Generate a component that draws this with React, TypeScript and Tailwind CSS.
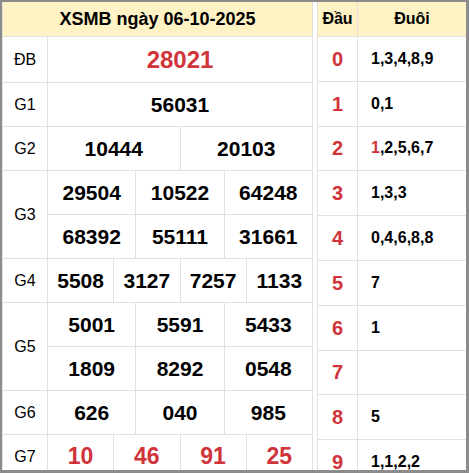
const RED = 'text-[#d0343a]';

const prizes: { label: string; rows: string[][]; size: string; red?: boolean; tall?: boolean }[] = [
  { label: 'ĐB', rows: [['28021']], size: 'text-[24px]', red: true, tall: true },
  { label: 'G1', rows: [['56031']], size: 'text-[21px]' },
  { label: 'G2', rows: [['10444', '20103']], size: 'text-[21px]' },
  { label: 'G3', rows: [['29504', '10522', '64248'], ['68392', '55111', '31661']], size: 'text-[21px]' },
  { label: 'G4', rows: [['5508', '3127', '7257', '1133']], size: 'text-[21px]' },
  { label: 'G5', rows: [['5001', '5591', '5433'], ['1809', '8292', '0548']], size: 'text-[21px]' },
  { label: 'G6', rows: [['626', '040', '985']], size: 'text-[21px]' },
  { label: 'G7', rows: [['10', '46', '91', '25']], size: 'text-[23px]', red: true },
];

const heads: { head: string; tails: { v: string; red?: boolean }[] }[] = [
  { head: '0', tails: [{ v: '1' }, { v: '3' }, { v: '4' }, { v: '8' }, { v: '9' }] },
  { head: '1', tails: [{ v: '0' }, { v: '1' }] },
  { head: '2', tails: [{ v: '1', red: true }, { v: '2' }, { v: '5' }, { v: '6' }, { v: '7' }] },
  { head: '3', tails: [{ v: '1' }, { v: '3' }, { v: '3' }] },
  { head: '4', tails: [{ v: '0' }, { v: '4' }, { v: '6' }, { v: '8' }, { v: '8' }] },
  { head: '5', tails: [{ v: '7' }] },
  { head: '6', tails: [{ v: '1' }] },
  { head: '7', tails: [] },
  { head: '8', tails: [{ v: '5' }] },
  { head: '9', tails: [{ v: '1' }, { v: '1' }, { v: '2' }, { v: '2' }] },
];

function PrizeRow({
  label,
  rows,
  size,
  red,
  tall,
}: {
  label: string;
  rows: string[][];
  size: string;
  red?: boolean;
  tall?: boolean;
}) {
  return (
    <div className="flex border-b border-[#e4e1dc]">
      <div className="flex w-[45px] shrink-0 items-center justify-center border-r border-[#e4e1dc] text-[16px] text-black">
        {label}
      </div>
      <div className="flex flex-1 flex-col">
        {rows.map((row, i) => (
          <div
            key={i}
            className={`flex ${tall ? 'h-[45px]' : 'h-[43px]'} ${i < rows.length - 1 ? 'box-content border-b border-[#e4e1dc]' : ''}`}
          >
            {row.map((num, j) => (
              <div
                key={j}
                className={`flex flex-1 items-center justify-center font-bold ${size} ${
                  j < row.length - 1 ? 'border-r border-[#e4e1dc]' : ''
                } ${red ? RED : 'text-black'}`}
              >
                {num}
              </div>
            ))}
          </div>
        ))}
      </div>
    </div>
  );
}

export default function App() {
  return (
    <div
      className="h-[473px] w-[469px] overflow-hidden border-t-2 border-l-2 border-r-[3px] border-b-[3px] border-[#8c8c8c] bg-white"
      style={{ fontFamily: '"Liberation Sans", Arial, sans-serif' }}
    >
      <div className="flex gap-1">
        <div className="w-[311px] shrink-0 border-x border-[#e4e1dc]">
          <div className="flex h-[35px] items-center justify-center border-b border-[#e4e1dc] bg-[#fff2c4] text-[18px] font-bold text-black">
            XSMB ngày 06-10-2025
          </div>
          {prizes.map((p) => (
            <PrizeRow key={p.label} {...p} />
          ))}
        </div>

        <div className="flex-1 border-l border-[#e4e1dc]">
          <div className="flex h-[35px] border-b border-[#e4e1dc] bg-[#fff2c4] text-[16px] font-bold text-black">
            <div className="flex w-[40px] items-center justify-center border-r border-[#e4e1dc]">Đầu</div>
            <div className="flex flex-1 items-center justify-center">Đuôi</div>
          </div>
          {heads.map((h) => (
            <div key={h.head} className="flex h-[44.8px] border-b border-[#e4e1dc]">
              <div className={`flex w-[40px] items-center justify-center border-r border-[#e4e1dc] text-[20px] font-bold ${RED}`}>
                {h.head}
              </div>
              <div className="flex flex-1 items-center pl-[13px] text-[16px] font-bold text-black">
                {h.tails.map((t, i) => (
                  <span key={i}>
                    {i > 0 && ','}
                    <span className={t.red ? RED : ''}>{t.v}</span>
                  </span>
                ))}
              </div>
            </div>
          ))}
        </div>
      </div>
    </div>
  );
}
